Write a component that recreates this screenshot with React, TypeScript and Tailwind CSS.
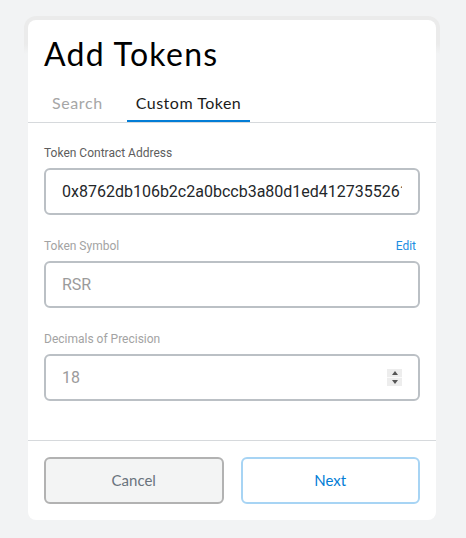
import React from 'react';

const ui = { fontFamily: 'Lato, "Open Sans", sans-serif' };
const body = { fontFamily: 'Roboto, "Liberation Sans", sans-serif' };

const Label = ({ text, muted, action }: { text: string; muted?: boolean; action?: string }) => (
  <div className="flex items-center justify-between h-[14px] mb-[8px] pr-[4px]">
    <span className={`text-[12px] leading-[14px] ${muted ? 'text-[#a3a3a3]' : 'text-[#5d5d5d]'}`} style={body}>
      {text}
    </span>
    {action && (
      <span className="text-[12px] leading-[14px] text-[#1c8de2]" style={body}>
        {action}
      </span>
    )}
  </div>
);

const Spinner = () => (
  <div className="flex flex-col w-[15px] h-[17px] bg-[#ededed] mr-[16px]">
    <div className="flex-1 flex items-center justify-center border-b border-[#fafafa]">
      <svg width="6" height="4" viewBox="0 0 6 4"><path d="M3 0L6 4H0z" fill="#555" /></svg>
    </div>
    <div className="flex-1 flex items-center justify-center">
      <svg width="6" height="4" viewBox="0 0 6 4"><path d="M0 0H6L3 4z" fill="#555" /></svg>
    </div>
  </div>
);

export default function App() {
  return (
    <div className="w-[466px] h-[538px] bg-[#f2f3f4] pt-[16px] pl-[24px]">
      <div className="w-[416px] pt-[4px] px-[4px] rounded-t-[12px] bg-[linear-gradient(to_bottom,#ebebeb_0px,#ebebeb_28px,#f2f3f4_38px)]">
        <div className="w-[408px] h-[500px] bg-white rounded-[8px] flex flex-col">
          {/* header */}
          <div className="px-[16px] pt-[16px] h-[58px]">
            <h1 className="text-[32px] leading-[36px] tracking-[1.3px] text-black" style={ui}>Add Tokens</h1>
          </div>

          {/* tabs */}
          <div className="flex px-[15px] gap-[15px] border-b border-[#d6d9dc] h-[45px]">
            <div className="px-[9px] flex items-center text-[16px] tracking-[0.6px] text-[#a6a6a6] pt-[6px]" style={ui}>Search</div>
            <div className="px-[9px] flex items-center text-[16px] tracking-[0.5px] text-[#1b1b1b] pt-[8px] border-b-2 border-[#037dd6]" style={ui}>
              Custom Token
            </div>
          </div>

          {/* form */}
          <div className="px-[16px] pt-[23px] flex-1">
            <Label text="Token Contract Address" />
            <div className="h-[47px] border-2 border-[#bbc0c5] rounded-[6px] flex items-center pl-[16px] pr-[16px]">
              <input
                readOnly
                value="0x8762db106b2c2a0bccb3a80d1ed41273552616e8"
                className="w-full min-w-0 bg-transparent outline-none text-[16px] text-[#24272a]"
                style={body}
              />
            </div>

            <div className="h-[24px]" />
            <Label text="Token Symbol" muted action="Edit" />
            <div className="h-[47px] border-2 border-[#bbc0c5] rounded-[6px] flex items-center pl-[16px]">
              <span className="text-[16px] text-[#9b9b9b]" style={body}>RSR</span>
            </div>

            <div className="h-[24px]" />
            <Label text="Decimals of Precision" muted />
            <div className="h-[47px] border-2 border-[#bbc0c5] rounded-[6px] flex items-center justify-between pl-[16px]">
              <span className="text-[16px] text-[#9b9b9b]" style={body}>18</span>
              <Spinner />
            </div>
          </div>

          {/* footer */}
          <div className="border-t border-[#d6d9dc] px-[16px] pt-[16px] pb-[16px] flex gap-[17px]">
            <button className="flex-1 h-[47px] rounded-[6px] border-2 border-[#b2b2b2] bg-[#f3f4f4] text-[15px] text-[#6a737d]" style={ui}>
              Cancel
            </button>
            <button className="flex-1 h-[47px] rounded-[6px] border-2 border-[#a7d4f4] bg-white text-[15px] text-[#037dd6]" style={ui}>
              Next
            </button>
          </div>
        </div>
      </div>
    </div>
  );
}
